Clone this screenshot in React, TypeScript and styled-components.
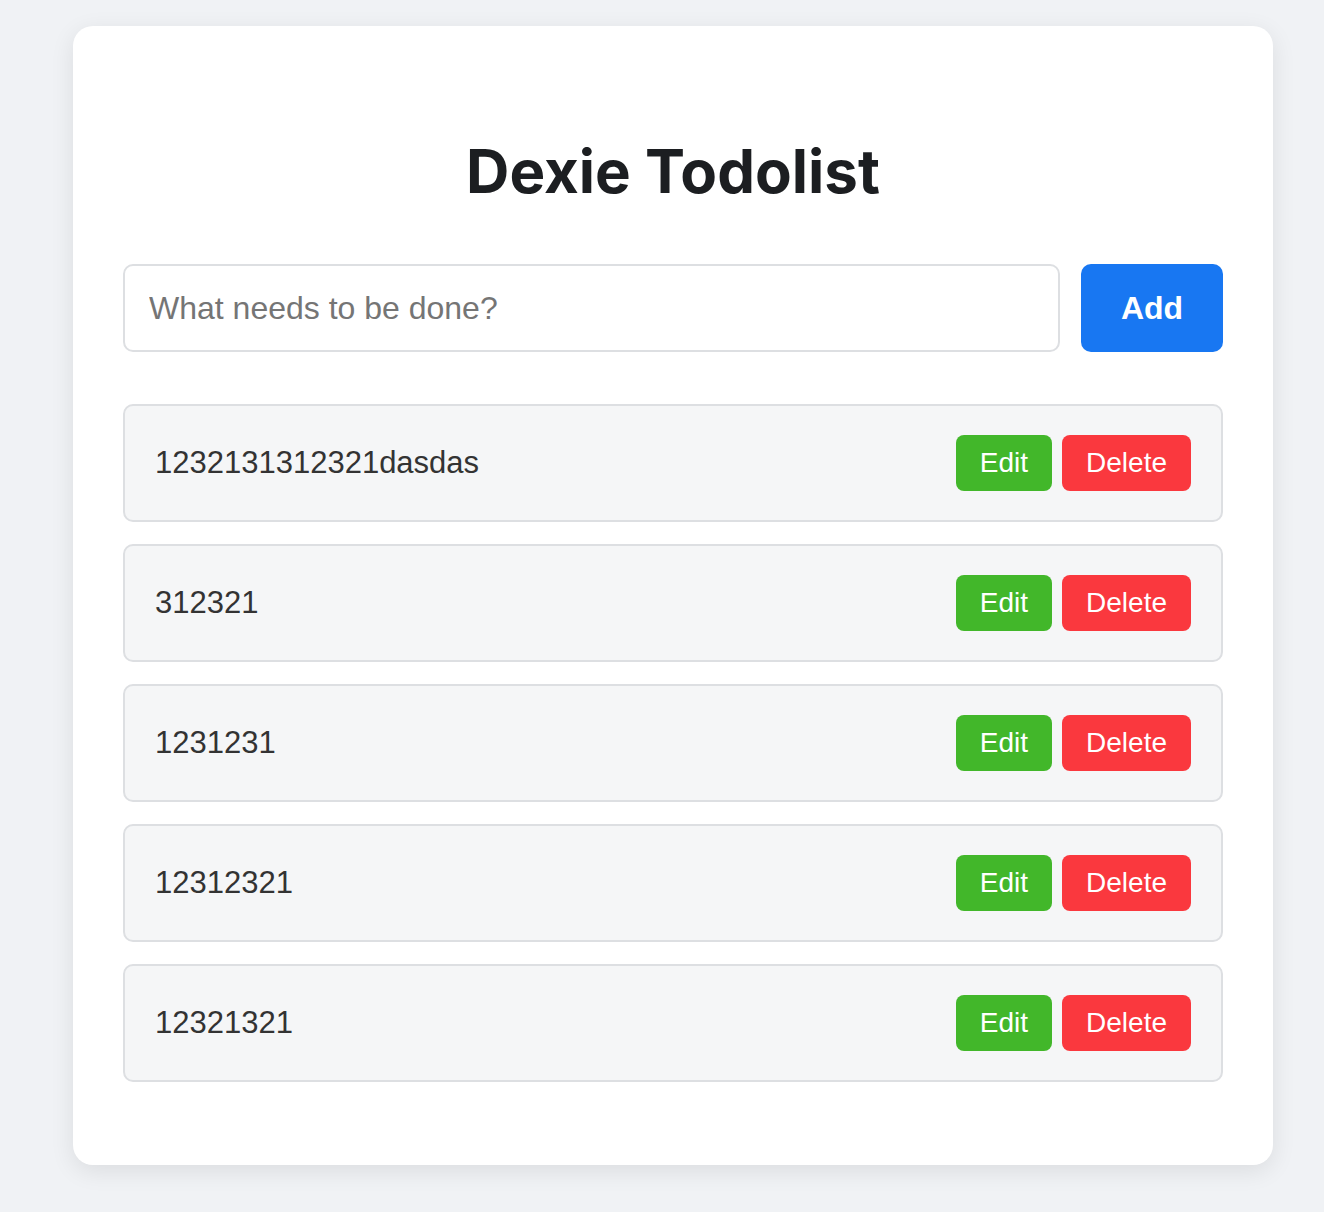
import React from "react";
import styled, { createGlobalStyle } from "styled-components";

const todos = ["1232131312321dasdas", "312321", "1231231", "12312321", "12321321"];

function App() {
  return (
    <>
      <GlobalStyle />
      <Page>
        <Card>
          <Title>Dexie Todolist</Title>
          <AddRow>
            <TodoInput placeholder="What needs to be done?" />
            <AddButton>Add</AddButton>
          </AddRow>
          <List>
            {todos.map((t, i) => (
              <Item key={i}>
                <ItemText>{t}</ItemText>
                <Actions>
                  <SmallButton kind="edit">Edit</SmallButton>
                  <SmallButton kind="delete">Delete</SmallButton>
                </Actions>
              </Item>
            ))}
          </List>
        </Card>
      </Page>
    </>
  );
}

const GlobalStyle = createGlobalStyle`
  body {
    margin: 0;
    background: #f0f2f5;
    font-family: "Liberation Sans", Arial, sans-serif;
  }
`;

const Page = styled.div`
  padding: 26px 0 47px 73px;
`;

const Card = styled.div`
  width: 1200px;
  box-sizing: border-box;
  background: #fff;
  border-radius: 20px;
  box-shadow: 0 6px 24px rgba(0, 0, 0, 0.09);
  padding: 50px 50px 83px;
`;

const Title = styled.h1`
  margin: 59px 0 57px;
  text-align: center;
  font-family: Inter, "Liberation Sans", sans-serif;
  font-weight: 700;
  font-size: 60px;
  color: #1c1e21;
`;

const AddRow = styled.div`
  display: flex;
  gap: 21px;
  margin-bottom: 52px;
`;

const TodoInput = styled.input`
  flex: 1;
  height: 88px;
  box-sizing: border-box;
  border: 2px solid #dddfe2;
  border-radius: 10px;
  padding: 0 24px;
  font-family: "Liberation Sans", Arial, sans-serif;
  font-size: 32px;
  color: #1c1e21;
  outline: none;
  &::placeholder {
    color: #757575;
  }
`;

const AddButton = styled.button`
  width: 142px;
  height: 88px;
  border: none;
  border-radius: 10px;
  background: #1877f2;
  color: #fff;
  font-family: "Liberation Sans", Arial, sans-serif;
  font-weight: 700;
  font-size: 32px;
  cursor: pointer;
`;

const List = styled.div`
  display: flex;
  flex-direction: column;
  gap: 22px;
`;

const Item = styled.div`
  display: flex;
  align-items: center;
  justify-content: space-between;
  padding: 29px 30px;
  border: 2px solid #dddfe2;
  border-radius: 10px;
  background: #f5f6f7;
`;

const ItemText = styled.span`
  font-size: 31px;
  color: #333;
`;

const Actions = styled.div`
  display: flex;
  gap: 10px;
`;

const SmallButton = styled.button<{ kind: "edit" | "delete" }>`
  height: 56px;
  padding: 0 24px;
  border: none;
  border-radius: 8px;
  background: ${(p) => (p.kind === "edit" ? "#42b72a" : "#fa383e")};
  color: #fff;
  font-family: "Liberation Sans", Arial, sans-serif;
  font-size: 28px;
  cursor: pointer;
`;

export default App;
